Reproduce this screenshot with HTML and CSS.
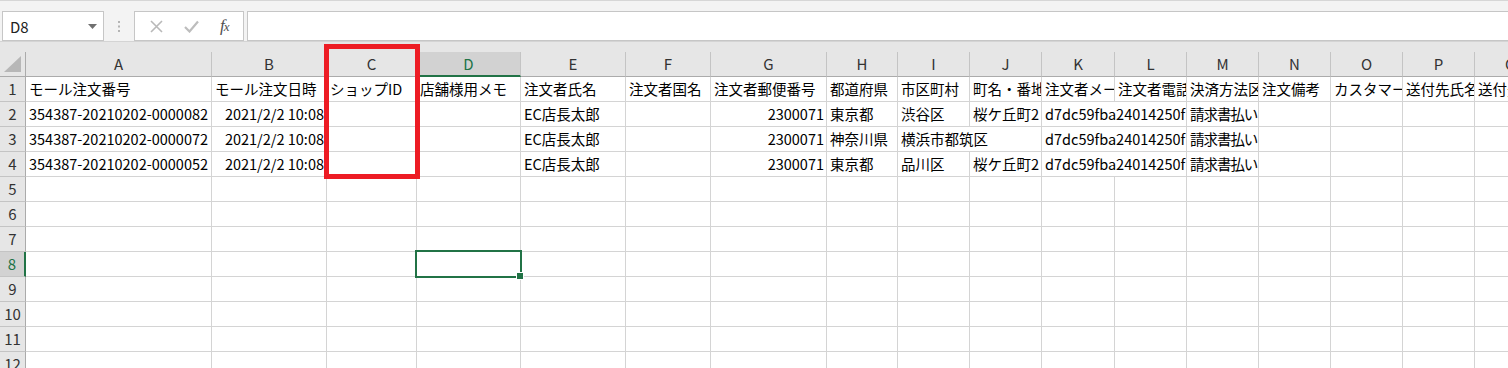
FILE: index.html
```html
<!DOCTYPE html>
<html lang="ja">
<head>
    <meta charset="UTF-8">
    <meta name="viewport" content="width=device-width, initial-scale=1.0">
    <title>注文データ - Excel</title>
    <link rel="stylesheet" href="styles.css">
</head>
<body>

    <div class="topbar">
        <div class="namebox">
            <span>D8</span>
            <svg class="caret" width="9" height="5" viewBox="0 0 9 5"><polygon points="0,0 9,0 4.5,5" fill="#707070"/></svg>
        </div>
        <div class="dots">
            <svg width="3" height="11" viewBox="0 0 3 11"><rect x="0" y="0" width="2" height="2" fill="#b4b4b4"/><rect x="0" y="4.5" width="2" height="2" fill="#b4b4b4"/><rect x="0" y="9" width="2" height="2" fill="#b4b4b4"/></svg>
        </div>
        <div class="fbuttons">
            <svg width="13" height="13" viewBox="0 0 13 13"><path d="M1 1 L12 12 M12 1 L1 12" stroke="#b9b9b9" stroke-width="1.6" fill="none"/></svg>
            <svg width="15" height="13" viewBox="0 0 15 13"><path d="M1 7 L5.5 11.5 L14 1.5" stroke="#bdbdbd" stroke-width="2.2" fill="none"/></svg>
            <span class="fx"><i>f</i><i class="x">x</i></span>
        </div>
        <div class="formula"></div>
    </div>

    <div class="sheetwrap">
        <div class="sheet">
            <div class="corner">
                <svg width="18" height="17" viewBox="0 0 18 17"><polygon points="17,0 17,16 0,16" fill="#b7b7b7"/></svg>
            </div>
            <div class="ch">A</div><div class="ch">B</div><div class="ch">C</div><div class="ch active">D</div>
            <div class="ch">E</div><div class="ch">F</div><div class="ch">G</div><div class="ch">H</div>
            <div class="ch">I</div><div class="ch">J</div><div class="ch">K</div><div class="ch">L</div>
            <div class="ch">M</div><div class="ch">N</div><div class="ch">O</div><div class="ch">P</div><div class="ch">Q</div>

            <!-- row 1 -->
            <div class="rh">1</div>
            <div class="c">モール注文番号</div>
            <div class="c">モール注文日時</div>
            <div class="c">ショップID</div>
            <div class="c">店舗様用メモ</div>
            <div class="c">注文者氏名</div>
            <div class="c">注文者国名</div>
            <div class="c">注文者郵便番号</div>
            <div class="c">都道府県</div>
            <div class="c">市区町村</div>
            <div class="c">町名・番地</div>
            <div class="c">注文者メールアドレス</div>
            <div class="c">注文者電話番号</div>
            <div class="c">決済方法区分</div>
            <div class="c">注文備考</div>
            <div class="c">カスタマーID</div>
            <div class="c">送付先氏名</div>
            <div class="c">送付先郵便番号</div>

            <!-- row 2 -->
            <div class="rh">2</div>
            <div class="c">354387-20210202-0000082</div>
            <div class="c num">2021/2/2 10:08</div>
            <div class="c"></div>
            <div class="c"></div>
            <div class="c">EC店長太郎</div>
            <div class="c"></div>
            <div class="c num">2300071</div>
            <div class="c">東京都</div>
            <div class="c">渋谷区</div>
            <div class="c">桜ケ丘町2</div>
            <div class="c span2">d7dc59fba24014250f</div>
            <div class="c pay">請求書払い</div>
            <div class="c"></div><div class="c"></div><div class="c"></div><div class="c"></div>

            <!-- row 3 -->
            <div class="rh">3</div>
            <div class="c">354387-20210202-0000072</div>
            <div class="c num">2021/2/2 10:08</div>
            <div class="c"></div>
            <div class="c"></div>
            <div class="c">EC店長太郎</div>
            <div class="c"></div>
            <div class="c num">2300071</div>
            <div class="c">神奈川県</div>
            <div class="c span2">横浜市都筑区</div>
            <div class="c span2">d7dc59fba24014250f</div>
            <div class="c pay">請求書払い</div>
            <div class="c"></div><div class="c"></div><div class="c"></div><div class="c"></div>

            <!-- row 4 -->
            <div class="rh">4</div>
            <div class="c">354387-20210202-0000052</div>
            <div class="c num">2021/2/2 10:08</div>
            <div class="c"></div>
            <div class="c"></div>
            <div class="c">EC店長太郎</div>
            <div class="c"></div>
            <div class="c num">2300071</div>
            <div class="c">東京都</div>
            <div class="c">品川区</div>
            <div class="c">桜ケ丘町2</div>
            <div class="c span2">d7dc59fba24014250f</div>
            <div class="c pay">請求書払い</div>
            <div class="c"></div><div class="c"></div><div class="c"></div><div class="c"></div>

            <!-- empty rows -->
            <div class="rh">5</div><div class="c"></div><div class="c"></div><div class="c"></div><div class="c"></div><div class="c"></div><div class="c"></div><div class="c"></div><div class="c"></div><div class="c"></div><div class="c"></div><div class="c"></div><div class="c"></div><div class="c"></div><div class="c"></div><div class="c"></div><div class="c"></div><div class="c"></div>
            <div class="rh">6</div><div class="c"></div><div class="c"></div><div class="c"></div><div class="c"></div><div class="c"></div><div class="c"></div><div class="c"></div><div class="c"></div><div class="c"></div><div class="c"></div><div class="c"></div><div class="c"></div><div class="c"></div><div class="c"></div><div class="c"></div><div class="c"></div><div class="c"></div>
            <div class="rh">7</div><div class="c"></div><div class="c"></div><div class="c"></div><div class="c"></div><div class="c"></div><div class="c"></div><div class="c"></div><div class="c"></div><div class="c"></div><div class="c"></div><div class="c"></div><div class="c"></div><div class="c"></div><div class="c"></div><div class="c"></div><div class="c"></div><div class="c"></div>
            <div class="rh active">8</div><div class="c"></div><div class="c"></div><div class="c"></div><div class="c sel"></div><div class="c"></div><div class="c"></div><div class="c"></div><div class="c"></div><div class="c"></div><div class="c"></div><div class="c"></div><div class="c"></div><div class="c"></div><div class="c"></div><div class="c"></div><div class="c"></div><div class="c"></div>
            <div class="rh">9</div><div class="c"></div><div class="c"></div><div class="c"></div><div class="c"></div><div class="c"></div><div class="c"></div><div class="c"></div><div class="c"></div><div class="c"></div><div class="c"></div><div class="c"></div><div class="c"></div><div class="c"></div><div class="c"></div><div class="c"></div><div class="c"></div><div class="c"></div>
            <div class="rh">10</div><div class="c"></div><div class="c"></div><div class="c"></div><div class="c"></div><div class="c"></div><div class="c"></div><div class="c"></div><div class="c"></div><div class="c"></div><div class="c"></div><div class="c"></div><div class="c"></div><div class="c"></div><div class="c"></div><div class="c"></div><div class="c"></div><div class="c"></div>
            <div class="rh">11</div><div class="c"></div><div class="c"></div><div class="c"></div><div class="c"></div><div class="c"></div><div class="c"></div><div class="c"></div><div class="c"></div><div class="c"></div><div class="c"></div><div class="c"></div><div class="c"></div><div class="c"></div><div class="c"></div><div class="c"></div><div class="c"></div><div class="c"></div>
            <div class="rh">12</div><div class="c"></div><div class="c"></div><div class="c"></div><div class="c"></div><div class="c"></div><div class="c"></div><div class="c"></div><div class="c"></div><div class="c"></div><div class="c"></div><div class="c"></div><div class="c"></div><div class="c"></div><div class="c"></div><div class="c"></div><div class="c"></div><div class="c"></div>
        </div>
    </div>

    <!-- highlight drawn over column C -->
    <div class="mark"></div>

</body>
</html>
```

FILE: styles.css
```css
body {
    margin: 0;
    width: 1508px;
    height: 368px;
    overflow: hidden;
    background-color: #fff;
    font-family: "Noto Sans CJK JP", "Noto Sans", sans-serif;
    color: #000;
}

/* formula bar */
.topbar {
    height: 30px;
    border-top: 1px solid #d6d6d6;
    border-bottom: 1px solid #d4d4d4;
    background-color: #f3f3f3;
    display: flex;
    align-items: flex-start;
    padding-top: 10px;
}

.namebox {
    margin-left: 2px;
    width: 102px;
    height: 30px;
    box-sizing: border-box;
    border: 1px solid #c6c6c6;
    background-color: #fff;
    display: flex;
    align-items: center;
    justify-content: space-between;
    padding: 0 6px 0 7px;
    font-size: 15px;
    color: #222;
}

.caret {
    margin-top: 1px;
}

.dots {
    width: 30px;
    height: 30px;
    display: flex;
    align-items: center;
    justify-content: center;
}

.fbuttons {
    width: 110px;
    height: 30px;
    box-sizing: border-box;
    border: 1px solid #c6c6c6;
    background-color: #fff;
    display: flex;
    align-items: center;
    justify-content: space-around;
    padding: 0 4px 0 4px;
}

.fx {
    font-family: "Liberation Serif", serif;
    font-size: 17px;
    color: #505050;
    letter-spacing: -1px;
}

.fx .x {
    font-size: 13px;
}

.formula {
    flex: 1;
    margin-left: 3px;
    height: 30px;
    box-sizing: border-box;
    border: 1px solid #c6c6c6;
    border-right: none;
    background-color: #fff;
}

/* worksheet */
.sheetwrap {
    background-color: #e6e6e6;
    padding-top: 10px;
}

.sheet {
    display: grid;
    grid-template-columns: 26px 186px 115px 90px 104px 105px 85px 116px 71px 72px 72px 73px 72px 72px 72px 72px 72px 72px;
    grid-auto-rows: 25px;
    font-size: 14.5px;
}

.sheet > div {
    box-sizing: border-box;
    overflow: hidden;
    white-space: nowrap;
}

.corner {
    background-color: #e6e6e6;
    border-right: 1px solid #ababab;
    border-bottom: 1px solid #ababab;
    display: flex;
    align-items: flex-end;
    justify-content: flex-end;
    padding: 0 3px 3px 0;
}

.ch {
    background-color: #e6e6e6;
    border-right: 1px solid #c4c4c4;
    border-bottom: 1px solid #ababab;
    text-align: center;
    line-height: 24px;
    font-size: 15px;
    color: #333;
}

.ch.active {
    background-color: #d2d2d2;
    color: #217346;
    border-bottom: 2px solid #217346;
}

.rh {
    background-color: #e6e6e6;
    border-right: 1px solid #ababab;
    border-bottom: 1px solid #c4c4c4;
    text-align: center;
    line-height: 24px;
    font-size: 15px;
    color: #333;
}

.rh.active {
    background-color: #d2d2d2;
    color: #217346;
    border-right: 2px solid #217346;
}

.c {
    background-color: #fff;
    border-right: 1px solid #d4d4d4;
    border-bottom: 1px solid #d4d4d4;
    line-height: 24px;
    padding: 0 2px 0 3px;
}

.c.num {
    text-align: right;
}

.c.span2 {
    grid-column: span 2;
}

.c.pay {
    font-feature-settings: "palt";
    letter-spacing: -1px;
    padding-right: 0;
}

.c.sel {
    position: relative;
    overflow: visible;
}

.c.sel::after {
    content: "";
    position: absolute;
    top: -2px;
    left: -2px;
    right: -2px;
    bottom: -2px;
    border: 2px solid #217346;
}

.c.sel::before {
    content: "";
    position: absolute;
    right: -4px;
    bottom: -4px;
    width: 6px;
    height: 6px;
    background-color: #217346;
    border: 1px solid #fff;
    z-index: 1;
}

/* red highlight box */
.mark {
    position: absolute;
    left: 324px;
    top: 44px;
    width: 96px;
    height: 135px;
    box-sizing: border-box;
    border: 5px solid #ed1c24;
}
```
